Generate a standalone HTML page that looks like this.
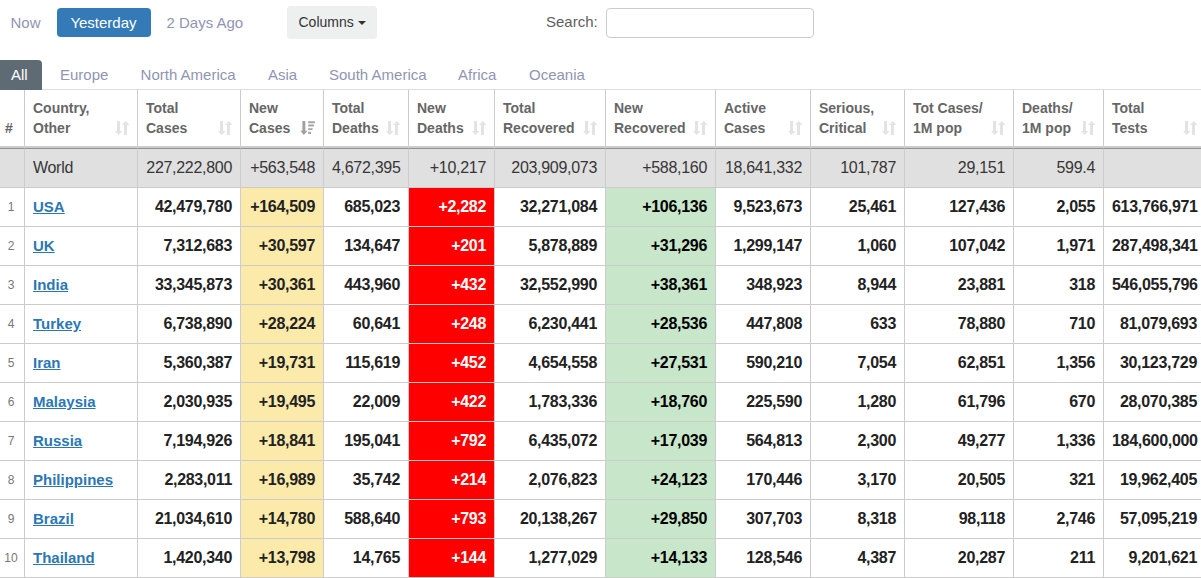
<!DOCTYPE html>
<html><head><meta charset="utf-8">
<style>
html,body{margin:0;padding:0;width:1201px;height:578px;overflow:hidden;background:#fff;font-family:"Liberation Sans",sans-serif;}
.abs{position:absolute;white-space:nowrap;}
.top{font-size:15px;line-height:17px;color:#9095b2;}
.btn-y{left:57px;top:8px;width:94px;height:29px;background:#337ab7;border-radius:4px;}
.btn-y span{position:absolute;left:13.4px;top:6px;color:#fff;font-size:15px;line-height:17px;}
.btn-c{left:287px;top:6px;width:90px;height:33px;background:#eef0f0;border-radius:4px;}
.btn-c span{position:absolute;left:11.5px;top:8.3px;color:#333;font-size:14px;line-height:16px;}
.caret{position:absolute;left:71px;top:15px;width:0;height:0;border-left:4px solid transparent;border-right:4px solid transparent;border-top:4px solid #333;}
.search{left:546px;top:13px;font-size:15px;line-height:17px;color:#5e5e5e;}
.input{left:606px;top:8px;width:206px;height:28px;border:1px solid #ccc;border-radius:4px;}
.tab{font-size:15px;line-height:17px;color:#9095b2;top:66px;}
.tab-all{left:0;top:60px;width:42px;height:30px;background:#5f6b74;border-radius:0 4px 0 0;z-index:2;}
.tab-all span{position:absolute;left:11px;top:6px;color:#fff;font-size:15px;line-height:17px;}
.tabline{left:0;top:89px;width:1201px;height:1px;background:#ddd;}
table{position:absolute;left:0;top:90px;border-collapse:separate;border-spacing:0;table-layout:fixed;width:1206px;}
td,th{border:0;border-right:1px solid #ccc;border-bottom:1px solid #ccc;padding:0 8px;white-space:nowrap;box-sizing:border-box;}
th{height:58px;border-bottom:2px solid #ccc;font-size:14px;font-weight:bold;color:#666;text-align:left;vertical-align:top;line-height:20px;position:relative;padding-top:8px;box-sizing:border-box;}
td{height:39px;font-size:16px;letter-spacing:-0.3px;line-height:20px;font-weight:bold;color:#222;text-align:right;box-sizing:border-box;}
tr.world td{background:#e0e0e0;font-weight:normal;color:#363636;border-top:1px solid #919191;height:40px;}
td.n{font-size:12px;font-weight:normal;color:#777;text-align:center;padding:0 2px 0 0;letter-spacing:0;}
td.c{text-align:left;}
td.c a{color:#2b77b5;text-decoration:underline;font-size:15px;letter-spacing:0;}
td.y{background:#fbeaaa;}
td.r{background:#ff0000;color:#fff;}
td.g{background:#c8e6c9;color:#000;}
.si{position:absolute;right:7px;top:31px;}
</style></head><body>
<div class="abs top" style="left:10.5px;top:14px;">Now</div>
<div class="abs btn-y"><span>Yesterday</span></div>
<div class="abs top" style="left:166.5px;top:14px;">2 Days Ago</div>
<div class="abs btn-c"><span>Columns</span><i class="caret"></i></div>
<div class="abs search">Search:</div>
<div class="abs input"></div>
<div class="abs tab-all"><span>All</span></div>
<div class="abs tab" style="left:60px;">Europe</div>
<div class="abs tab" style="left:140.6px;">North America</div>
<div class="abs tab" style="left:268px;">Asia</div>
<div class="abs tab" style="left:329px;">South America</div>
<div class="abs tab" style="left:458px;">Africa</div>
<div class="abs tab" style="left:529px;">Oceania</div>
<div class="abs tabline"></div>
<table>
<colgroup>
<col style="width:25px"><col style="width:113px"><col style="width:103px"><col style="width:83px"><col style="width:85px"><col style="width:86px"><col style="width:111px"><col style="width:110px"><col style="width:95px"><col style="width:94px"><col style="width:109px"><col style="width:90px"><col style="width:102px">
</colgroup>
<thead><tr>
<th style="vertical-align:top;padding:28px 0 0 5px;">#</th>
<th>Country,<br>Other<svg class="si" width="15" height="14" viewBox="0 0 15 14"><path d="M2 0h3v10h2.5L3.5 14L0 10h2z M9 14h3V4h2.5L10.75 0L7 4h2z" fill="#e3e3e3"/></svg></th>
<th>Total<br>Cases<svg class="si" width="15" height="14" viewBox="0 0 15 14"><path d="M2 0h3v10h2.5L3.5 14L0 10h2z M9 14h3V4h2.5L10.75 0L7 4h2z" fill="#e3e3e3"/></svg></th>
<th>New<br>Cases<svg class="si" style="right:7px" width="16" height="14" viewBox="0 0 16 14"><path d="M2.4 0h2.9v9.8h2.2L3.85 14L0.3 9.8h2.1z" fill="#a0a0a0"/><path d="M8.2 0.2h6.7v2h-6.7z M8.2 3.6h5.7v2h-5.7z M8.2 7.2h4.4v1.9h-4.4z M8.2 10.8h2.8v2.1h-2.8z" fill="#a5a5a5"/></svg></th>
<th>Total<br>Deaths<svg class="si" width="15" height="14" viewBox="0 0 15 14"><path d="M2 0h3v10h2.5L3.5 14L0 10h2z M9 14h3V4h2.5L10.75 0L7 4h2z" fill="#e3e3e3"/></svg></th>
<th>New<br>Deaths<svg class="si" width="15" height="14" viewBox="0 0 15 14"><path d="M2 0h3v10h2.5L3.5 14L0 10h2z M9 14h3V4h2.5L10.75 0L7 4h2z" fill="#e3e3e3"/></svg></th>
<th>Total<br>Recovered<svg class="si" width="15" height="14" viewBox="0 0 15 14"><path d="M2 0h3v10h2.5L3.5 14L0 10h2z M9 14h3V4h2.5L10.75 0L7 4h2z" fill="#e3e3e3"/></svg></th>
<th>New<br>Recovered<svg class="si" width="15" height="14" viewBox="0 0 15 14"><path d="M2 0h3v10h2.5L3.5 14L0 10h2z M9 14h3V4h2.5L10.75 0L7 4h2z" fill="#e3e3e3"/></svg></th>
<th>Active<br>Cases<svg class="si" width="15" height="14" viewBox="0 0 15 14"><path d="M2 0h3v10h2.5L3.5 14L0 10h2z M9 14h3V4h2.5L10.75 0L7 4h2z" fill="#e3e3e3"/></svg></th>
<th>Serious,<br>Critical<svg class="si" width="15" height="14" viewBox="0 0 15 14"><path d="M2 0h3v10h2.5L3.5 14L0 10h2z M9 14h3V4h2.5L10.75 0L7 4h2z" fill="#e3e3e3"/></svg></th>
<th>Tot&nbsp;Cases/<br>1M pop<svg class="si" width="15" height="14" viewBox="0 0 15 14"><path d="M2 0h3v10h2.5L3.5 14L0 10h2z M9 14h3V4h2.5L10.75 0L7 4h2z" fill="#e3e3e3"/></svg></th>
<th>Deaths/<br>1M pop<svg class="si" width="15" height="14" viewBox="0 0 15 14"><path d="M2 0h3v10h2.5L3.5 14L0 10h2z M9 14h3V4h2.5L10.75 0L7 4h2z" fill="#e3e3e3"/></svg></th>
<th>Total<br>Tests<svg class="si" width="15" height="14" viewBox="0 0 15 14"><path d="M2 0h3v10h2.5L3.5 14L0 10h2z M9 14h3V4h2.5L10.75 0L7 4h2z" fill="#e3e3e3"/></svg></th>
</tr></thead>
<tbody>
<tr class="world"><td class="n"></td><td class="c">World</td><td>227,222,800</td><td>+563,548</td><td>4,672,395</td><td>+10,217</td><td>203,909,073</td><td>+588,160</td><td>18,641,332</td><td>101,787</td><td>29,151</td><td>599.4</td><td></td></tr>
<tr><td class="n">1</td><td class="c"><a>USA</a></td><td>42,479,780</td><td class="y">+164,509</td><td>685,023</td><td class="r">+2,282</td><td>32,271,084</td><td class="g">+106,136</td><td>9,523,673</td><td>25,461</td><td>127,436</td><td>2,055</td><td>613,766,971</td></tr>
<tr><td class="n">2</td><td class="c"><a>UK</a></td><td>7,312,683</td><td class="y">+30,597</td><td>134,647</td><td class="r">+201</td><td>5,878,889</td><td class="g">+31,296</td><td>1,299,147</td><td>1,060</td><td>107,042</td><td>1,971</td><td>287,498,341</td></tr>
<tr><td class="n">3</td><td class="c"><a>India</a></td><td>33,345,873</td><td class="y">+30,361</td><td>443,960</td><td class="r">+432</td><td>32,552,990</td><td class="g">+38,361</td><td>348,923</td><td>8,944</td><td>23,881</td><td>318</td><td>546,055,796</td></tr>
<tr><td class="n">4</td><td class="c"><a>Turkey</a></td><td>6,738,890</td><td class="y">+28,224</td><td>60,641</td><td class="r">+248</td><td>6,230,441</td><td class="g">+28,536</td><td>447,808</td><td>633</td><td>78,880</td><td>710</td><td>81,079,693</td></tr>
<tr><td class="n">5</td><td class="c"><a>Iran</a></td><td>5,360,387</td><td class="y">+19,731</td><td>115,619</td><td class="r">+452</td><td>4,654,558</td><td class="g">+27,531</td><td>590,210</td><td>7,054</td><td>62,851</td><td>1,356</td><td>30,123,729</td></tr>
<tr><td class="n">6</td><td class="c"><a>Malaysia</a></td><td>2,030,935</td><td class="y">+19,495</td><td>22,009</td><td class="r">+422</td><td>1,783,336</td><td class="g">+18,760</td><td>225,590</td><td>1,280</td><td>61,796</td><td>670</td><td>28,070,385</td></tr>
<tr><td class="n">7</td><td class="c"><a>Russia</a></td><td>7,194,926</td><td class="y">+18,841</td><td>195,041</td><td class="r">+792</td><td>6,435,072</td><td class="g">+17,039</td><td>564,813</td><td>2,300</td><td>49,277</td><td>1,336</td><td>184,600,000</td></tr>
<tr><td class="n">8</td><td class="c"><a>Philippines</a></td><td>2,283,011</td><td class="y">+16,989</td><td>35,742</td><td class="r">+214</td><td>2,076,823</td><td class="g">+24,123</td><td>170,446</td><td>3,170</td><td>20,505</td><td>321</td><td>19,962,405</td></tr>
<tr><td class="n">9</td><td class="c"><a>Brazil</a></td><td>21,034,610</td><td class="y">+14,780</td><td>588,640</td><td class="r">+793</td><td>20,138,267</td><td class="g">+29,850</td><td>307,703</td><td>8,318</td><td>98,118</td><td>2,746</td><td>57,095,219</td></tr>
<tr><td class="n">10</td><td class="c"><a>Thailand</a></td><td>1,420,340</td><td class="y">+13,798</td><td>14,765</td><td class="r">+144</td><td>1,277,029</td><td class="g">+14,133</td><td>128,546</td><td>4,387</td><td>20,287</td><td>211</td><td>9,201,621</td></tr>
</tbody>
</table>
</body></html>
